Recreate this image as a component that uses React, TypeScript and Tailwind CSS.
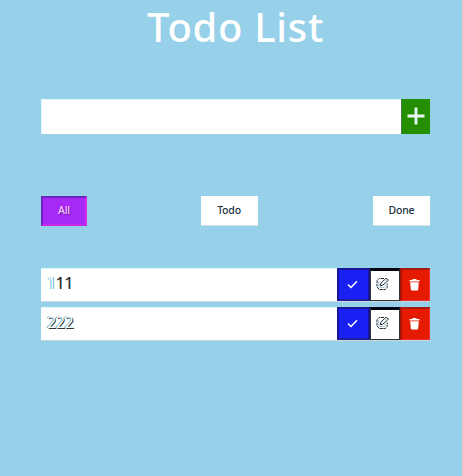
import { useState } from "react";

function EditIcon() {
  return (
    <svg width="14" height="14" viewBox="0 0 14 14" fill="none" stroke="#222b30" strokeWidth="1">
      <path d="M8 1.5H3.2L1 3.7v6L3.2 12.5h6.2l1.8-2.2V6.5" strokeDasharray="3 0.6" />
      <path d="M2.8 4v5.5l1 1h4.4l1-1V8" stroke="#7fa9ba" strokeWidth=".7" />
      <path d="M4.3 8.8l.5-2.5L10 1.2l2.4 2-5.6 5-2.5.6z" />
      <path d="M5 6.4l1.8 1.7M8.8 2.6l1.7 1.7" stroke="#8cc5dc" />
    </svg>
  );
}

function TodoRow({ text, solid }: { text: string; solid?: boolean }) {
  return (
    <li className="flex h-[33px] w-full bg-white shadow-[inset_0_1px_1px_#dcfaff,0_1px_0_#c9d6dc]">
      <span className="flex-1 pl-[6px] pt-[4px] text-[16px] leading-[22px] tracking-[-0.4px] text-white">
        {solid ? (
          <>
            <span className="[text-shadow:-1px_0_0_#62b4d6,1px_0_0_#62b4d6]">{text.slice(0, 1)}</span>
            <span className="text-[#17191b] [text-shadow:-1px_0_0_#c7dce5]">{text.slice(1)}</span>
          </>
        ) : (
          <span className="[text-shadow:-1px_0_0_#5aa5c4,1px_0.5px_0_#2c353a]">{text}</span>
        )}
      </span>
      <button className="flex w-[33px] items-center justify-center border-2 border-[#171793] border-b-[#20209f] bg-[#1820f4] pr-[2px]">
        <svg width="11" height="9" viewBox="0 0 11 9" fill="none" stroke="white" strokeWidth="1.5">
          <path d="M1 4.5L4 7.5L10 1.3" />
        </svg>
      </button>
      <button className="flex w-[30px] items-center justify-center border border-t-[3px] border-[#333] border-t-[#020611] bg-white pb-[3px] pr-[4px]">
        <EditIcon />
      </button>
      <button className="flex w-[30px] items-center justify-center border border-t-2 border-l-2 border-[#ef3038] border-l-[#a81208] border-t-[#a31b12] bg-[#e41b00] pb-[1px] pr-[2px]">
        <svg width="11" height="13" viewBox="0 0 11 13" fill="white">
          <path d="M3.5 1h4v1H10.5v1.5H.5V2h3zM1.2 4.3h8.6l-.6 7.2q-.1.9-1 .9H2.8q-.9 0-1-.9z" />
        </svg>
      </button>
    </li>
  );
}

export default function App() {
  const [value, setValue] = useState("");
  return (
    <main className="flex h-[476px] w-[462px] flex-col bg-[#96d0e9] px-[41px] pr-8 font-['Noto_Sans','Open_Sans',sans-serif]">
      <h1 className="mt-[-2px] h-[59px] whitespace-nowrap text-center text-[40px] font-medium leading-[58px] tracking-[0.7px] text-white">
        Todo List
      </h1>
      <form className="mt-[42px] flex h-[35px]" onSubmit={(e) => e.preventDefault()}>
        <input
          aria-label="New todo"
          value={value}
          onChange={(e) => setValue(e.target.value)}
          className="min-w-0 flex-1 bg-white px-2 shadow-[inset_1px_1px_1px_#dcfaff] outline-none"
        />
        <button className="flex w-[29px] items-center justify-center border-l border-[#447b55] bg-[#249000] pb-[2px]">
          <svg width="18" height="18" viewBox="0 0 18 18" stroke="#e8f7ff" strokeWidth="2.8">
            <path d="M9 .5v17M.5 9h17" />
          </svg>
        </button>
      </form>
      <nav className="mt-[62px] flex h-[30px] justify-between pb-px text-[10.5px] font-medium tracking-[-0.2px] text-[#20333c]">
        <button className="-mb-px w-[46px] border-2 border-[#6b25c0] border-b-[#c52ae8] border-r-[#d32bea] bg-[#a629f5] text-[#f8c9fc] [text-shadow:1px_1px_1px_#6420a0]">All</button>
        <button className="mr-0.5 w-[57px] bg-white pt-px shadow-[0_1px_0_#d2dfe5]">Todo</button>
        <button className="w-[57px] bg-white pt-px shadow-[0_1px_0_#d2dfe5]">Done</button>
      </nav>
      <ul className="mt-[42px] flex flex-col gap-[6px]">
        <TodoRow text="111" solid />
        <TodoRow text="222" />
      </ul>
    </main>
  );
}
